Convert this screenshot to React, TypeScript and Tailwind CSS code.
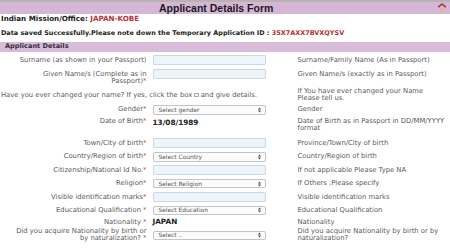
import React from "react";

const Star = () => <span className="text-[#c0392b]">*</span>;

const Arrows = () => (
  <svg width="3" height="6" viewBox="0 0 3 6" className="shrink-0">
    <path d="M0 2.4 L1.5 0.4 L3 2.4 Z" fill="#444" />
    <path d="M0 3.6 L1.5 5.6 L3 3.6 Z" fill="#444" />
  </svg>
);

const TextInput = () => (
  <div className="w-[113px] h-[10px] bg-[#eef5fa] border border-[#c9d8e3] rounded-[1px]" />
);

const Select = ({ text }: { text: string }) => (
  <div className="w-[113px] h-[9.5px] bg-[#fbfbfb] border border-[#c4c4c4] rounded-[2px] flex items-center justify-between pl-[5px] pr-[4px] text-[5.9px] leading-[6px] text-[#555]">
    <span>{text}</span>
    <Arrows />
  </div>
);

const Row = ({
  h,
  align = "items-center",
  label,
  field,
  hint,
  pad = "",
}: {
  h: string;
  align?: string;
  label: React.ReactNode;
  field: React.ReactNode;
  hint: React.ReactNode;
  pad?: string;
}) => (
  <div className={`grid grid-cols-[147px_150.5px_1fr] ${h} ${align}`}>
    <div className={`text-right pr-[0.5px] leading-[7px] whitespace-nowrap ${pad}`}>{label}</div>
    <div className={`pl-[5.5px] ${pad}`}>{field}</div>
    <div className={`leading-[7px] whitespace-nowrap ${pad}`}>{hint}</div>
  </div>
);

export default function App() {
  return (
    <div className="w-[450px] h-[251px] overflow-hidden bg-white font-['DejaVu_Sans',Verdana,sans-serif] text-[6.8px] text-[#5a5a5a]">
      {/* header */}
      <div className="h-[2px] bg-[#b9b3b0]" />
      <div className="h-[12px] bg-[#d6b6d7] flex items-center relative">
        <div className="pl-[159px] font-['Liberation_Sans',Arial,sans-serif] font-bold text-[10.5px] leading-[12px] text-[#1a1a1a]">
          Applicant Details Form
        </div>
        <svg width="10" height="10" viewBox="0 0 10 10" className="absolute right-[3px] top-[0px]">
          <path d="M1.2 5.2 L5 2 L8.8 5.2" fill="none" stroke="#a3323a" strokeWidth="1.6" strokeLinejoin="round" />
          <rect x="3" y="6" width="4" height="3.5" rx="1" fill="#e8b48c" />
        </svg>
      </div>

      <div className="h-[9px] leading-[9px] pl-[1px] font-bold text-[7.15px] text-[#222] whitespace-nowrap">
        Indian Mission/Office: <span className="text-[#b8323a]">JAPAN-KOBE</span>
      </div>
      <div className="mt-[6px] h-[9px] leading-[9px] pl-[1px] font-bold text-[6.48px] text-[#222] whitespace-nowrap">
        Data saved Successfully.Please note down the Temporary Application ID :{" "}
        <span className="text-[#b8323a]">35X7AXX7BVXQYSV</span>
      </div>

      <div className="mt-[4px] h-[9.5px] bg-[#d9bcd9] flex items-center pl-[5px] font-bold text-[6.6px] text-[#3a2d3a]">
        Applicant Details
      </div>

      <div className="mt-[1.5px]">
        <Row
          h="h-[14px]"
          label="Surname (as shown in your Passport)"
          field={<TextInput />}
          hint="Surname/Family Name (As in Passport)"
        />
        <Row
          h="h-[20px]"
          align="items-start"
          label={
            <div className="pt-[3.5px]">
              Given Name/s (Complete as in
              <br />
              Passport)<Star />
            </div>
          }
          field={
            <div className="pt-[2px]">
              <TextInput />
            </div>
          }
          hint={<div className="pt-[3.5px]">Given Name/s (exactly as in Passport)</div>}
        />
        <div className="grid grid-cols-[297.5px_1fr] h-[16px] items-center">
          <div className="pl-[1px] leading-[7px] whitespace-nowrap flex items-center">
            Have you ever changed your name? If yes, click the box
            <span className="inline-block w-[4.5px] h-[4.5px] border border-[#aaa] bg-[#f4f4f4] mx-[2px] rounded-[0.5px]" />
            and give details.
          </div>
          <div className="leading-[7px] whitespace-nowrap">
            If You have ever changed your Name
            <br />
            Please tell us.
          </div>
        </div>
        <Row
          h="h-[13.5px]"
          label={<>Gender<Star /></>}
          field={<Select text="Select gender" />}
          hint="Gender"
        />
        <Row
          h="h-[20.3px]"
          align="items-start"
          pad="pt-[1px]"
          label={<>Date of Birth<Star /></>}
          field={<span className="font-bold text-[#222] text-[7.3px] leading-[7px]">13/08/1989</span>}
          hint={
            <>
              Date of Birth as in Passport in DD/MM/YYYY
              <br />
              format
            </>
          }
        />
        <Row
          h="h-[13.4px]"
          label={<>Town/City of birth<Star /></>}
          field={<TextInput />}
          hint="Province/Town/City of birth"
        />
        <Row
          h="h-[13.4px]"
          label={<>Country/Region of birth<Star /></>}
          field={<Select text="Select Country" />}
          hint="Country/Region of birth"
        />
        <Row
          h="h-[13.4px]"
          label={<>Citizenship/National Id No.<Star /></>}
          field={<TextInput />}
          hint="If not applicable Please Type NA"
        />
        <Row
          h="h-[13.4px]"
          label={<>Religion<Star /></>}
          field={<Select text="Select Religion" />}
          hint="If Others .Please specify"
        />
        <Row
          h="h-[13.4px]"
          label={<>Visible identification marks<Star /></>}
          field={<TextInput />}
          hint="Visible identification marks"
        />
        <Row
          h="h-[13.4px]"
          label={<>Educational Qualification <Star /></>}
          field={<Select text="Select Education" />}
          hint="Educational Qualification"
        />
        <Row
          h="h-[10.2px]"
          label={<>Nationality <Star /></>}
          field={<span className="font-bold text-[#222] text-[7.3px] leading-[7px]">JAPAN</span>}
          hint="Nationality"
        />
        <Row
          h="h-[16px]"
          label={
            <>
              Did you acquire Nationality by birth or
              <br />
              by naturalization? <Star />
            </>
          }
          field={<Select text="Select .." />}
          hint={
            <>
              Did you acquire Nationality by birth or by
              <br />
              naturalization?
            </>
          }
        />
      </div>
    </div>
  );
}
